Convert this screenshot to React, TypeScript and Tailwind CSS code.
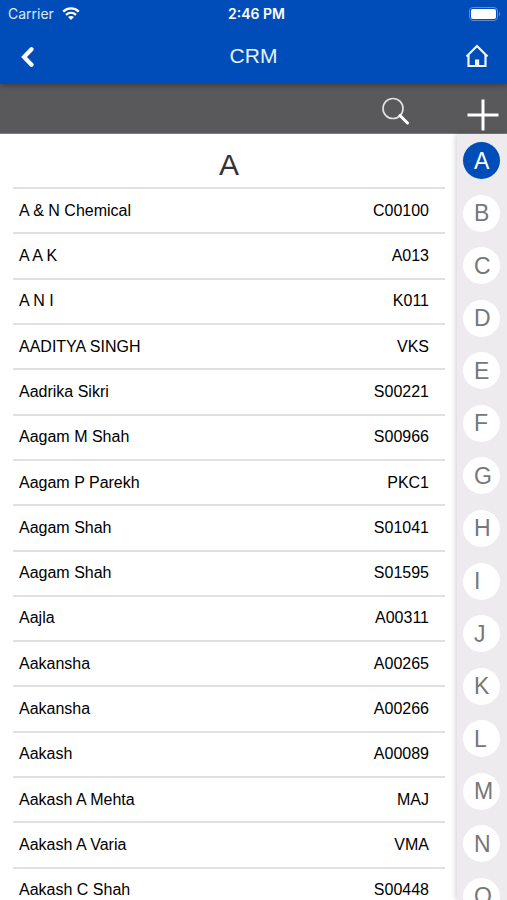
import React, { useState } from "react";

type Contact = { name: string; code: string };

const contacts: Contact[] = [
  { name: "A & N Chemical", code: "C00100" },
  { name: "A A K", code: "A013" },
  { name: "A N I", code: "K011" },
  { name: "AADITYA SINGH", code: "VKS" },
  { name: "Aadrika Sikri", code: "S00221" },
  { name: "Aagam M Shah", code: "S00966" },
  { name: "Aagam P Parekh", code: "PKC1" },
  { name: "Aagam Shah", code: "S01041" },
  { name: "Aagam Shah", code: "S01595" },
  { name: "Aajla", code: "A00311" },
  { name: "Aakansha", code: "A00265" },
  { name: "Aakansha", code: "A00266" },
  { name: "Aakash", code: "A00089" },
  { name: "Aakash A Mehta", code: "MAJ" },
  { name: "Aakash A Varia", code: "VMA" },
  { name: "Aakash C Shah", code: "S00448" },
];

const letters = "ABCDEFGHIJKLMNO".split("");

function WifiIcon() {
  return (
    <svg width="18" height="14" viewBox="0 0 18 14" aria-hidden="true">
      <g fill="none" stroke="#fff" strokeWidth="2.3">
        <path d="M1.2 4.6C5.6.4 12.4.4 16.8 4.6" />
        <path d="M4 7.8c2.9-2.6 7.1-2.6 10 0" />
      </g>
      <path d="M9 13 6 10c1.8-1.500 4.2-1.500 6 0z" fill="#fff" />
    </svg>
  );
}

function BatteryIcon() {
  return (
    <svg width="32" height="14" viewBox="0 0 32 14" aria-hidden="true">
      <rect x="0.5" y="0.5" width="28" height="13" rx="3.5" fill="none" stroke="#5c8bdb" />
      <rect x="2" y="2" width="25" height="10" rx="2" fill="#fff" />
      <path d="M30 5c1.6.5 1.6 3.5 0 4z" fill="#5c8bdb" />
    </svg>
  );
}

function StatusBar() {
  return (
    <div className="grid h-7 grid-cols-3 items-center pr-1.5 pl-2 font-['Inter','Liberation_Sans',sans-serif] text-sm text-white">
      <div className="flex items-center gap-2 text-[#dde8fa]">
        <span>Carrier</span>
        <WifiIcon />
      </div>
      <span className="pl-1 text-center font-semibold">2:46 PM</span>
      <div className="flex justify-end">
        <BatteryIcon />
      </div>
    </div>
  );
}

export default function App() {
  const [active, setActive] = useState("A");

  return (
    <div className="flex h-screen flex-col overflow-hidden bg-white font-['Liberation_Sans',Arial,sans-serif] text-black">
      <header className="z-10 bg-[#004dba] shadow-[0_1px_6px_rgba(0,0,0,0.35)]">
        <StatusBar />
        <div className="grid h-14 grid-cols-3 items-center px-4">
          <button type="button" aria-label="Back" className="justify-self-start p-1">
            <svg width="16" height="22" viewBox="0 0 16 22" aria-hidden="true">
              <path
                d="M11.5 4.2 4 12l7.5 7.800"
                fill="none"
                stroke="#fff"
                strokeWidth="4.2"
                strokeLinecap="round"
              />
            </svg>
          </button>
          <h1 className="text-center text-[21px] leading-7 text-[#e8f0ff]">CRM</h1>
          <button type="button" aria-label="Home" className="justify-self-end pr-px">
            <svg width="26" height="26" viewBox="0 0 26 26" aria-hidden="true">
              <g fill="none" stroke="#f0f6ff" strokeWidth="2.2">
                <path d="M2.500 13.500 13 3l10.500 10.500" />
                <path d="M4.500 12v11h17V12" />
              </g>
              <path d="M11 16.500h4.200V23H11z" fill="#f0f6ff" />
            </svg>
          </button>
        </div>
      </header>

      <div className="flex h-[50px] shrink-0 items-center justify-end gap-14 border-b border-[#7b7b7d] bg-[#59595b] pt-1 pr-2">
        <button type="button" aria-label="Search">
          <svg width="30" height="28" viewBox="0 0 30 28" aria-hidden="true">
            <circle cx="12" cy="11.5" r="10" fill="none" stroke="#e0e0e0" strokeWidth="1.7" />
            <path d="m19 18.500 7.500 7.500" stroke="#fff" strokeWidth="3" strokeLinecap="round" />
          </svg>
        </button>
        <button type="button" aria-label="Add" className="pt-2">
          <svg width="32" height="32" viewBox="0 0 32 32" aria-hidden="true">
            <path d="M16 0.5v31M0.500 16h31" stroke="#fff" strokeWidth="3" />
          </svg>
        </button>
      </div>

      <div className="flex min-h-0 flex-1">
        <main className="flex min-w-0 flex-1 flex-col pr-3 pl-[13px]">
          <h2 className="flex h-[53px] shrink-0 items-center justify-center pt-2 text-3xl text-[#333]">
            {active}
          </h2>
          <ul className="-mb-3 flex flex-1 flex-col">
            {contacts.map((c) => (
              <li key={c.code} className="flex flex-1 border-t-2 border-[#e0e0e0]">
                <button
                  type="button"
                  className="flex w-full items-center justify-between pr-4 pl-1.5 text-base"
                >
                  <span>{c.name}</span>
                  <span>{c.code}</span>
                </button>
              </li>
            ))}
          </ul>
        </main>

        <nav
          aria-label="Alphabet index"
          className="flex w-[50px] shrink-0 bg-[#edebed] shadow-[-1px_0_6px_rgba(0,0,0,0.2)]"
        >
          <ul className="-mb-[15px] flex flex-1 flex-col justify-between pt-2 pl-1.5">
            {letters.map((l) => (
              <li key={l} className="flex">
                <button
                  type="button"
                  onClick={() => setActive(l)}
                  aria-current={l === active}
                  className={
                    l === active
                      ? "h-[37px] w-[37px] rounded-full bg-[#004dba] pl-[11px] text-left text-[23px] leading-9 text-white"
                      : "h-[37px] w-[37px] rounded-full bg-white pl-[11px] text-left text-[23px] leading-9 text-[#777]"
                  }
                >
                  {l}
                </button>
              </li>
            ))}
          </ul>
        </nav>
      </div>
    </div>
  );
}
